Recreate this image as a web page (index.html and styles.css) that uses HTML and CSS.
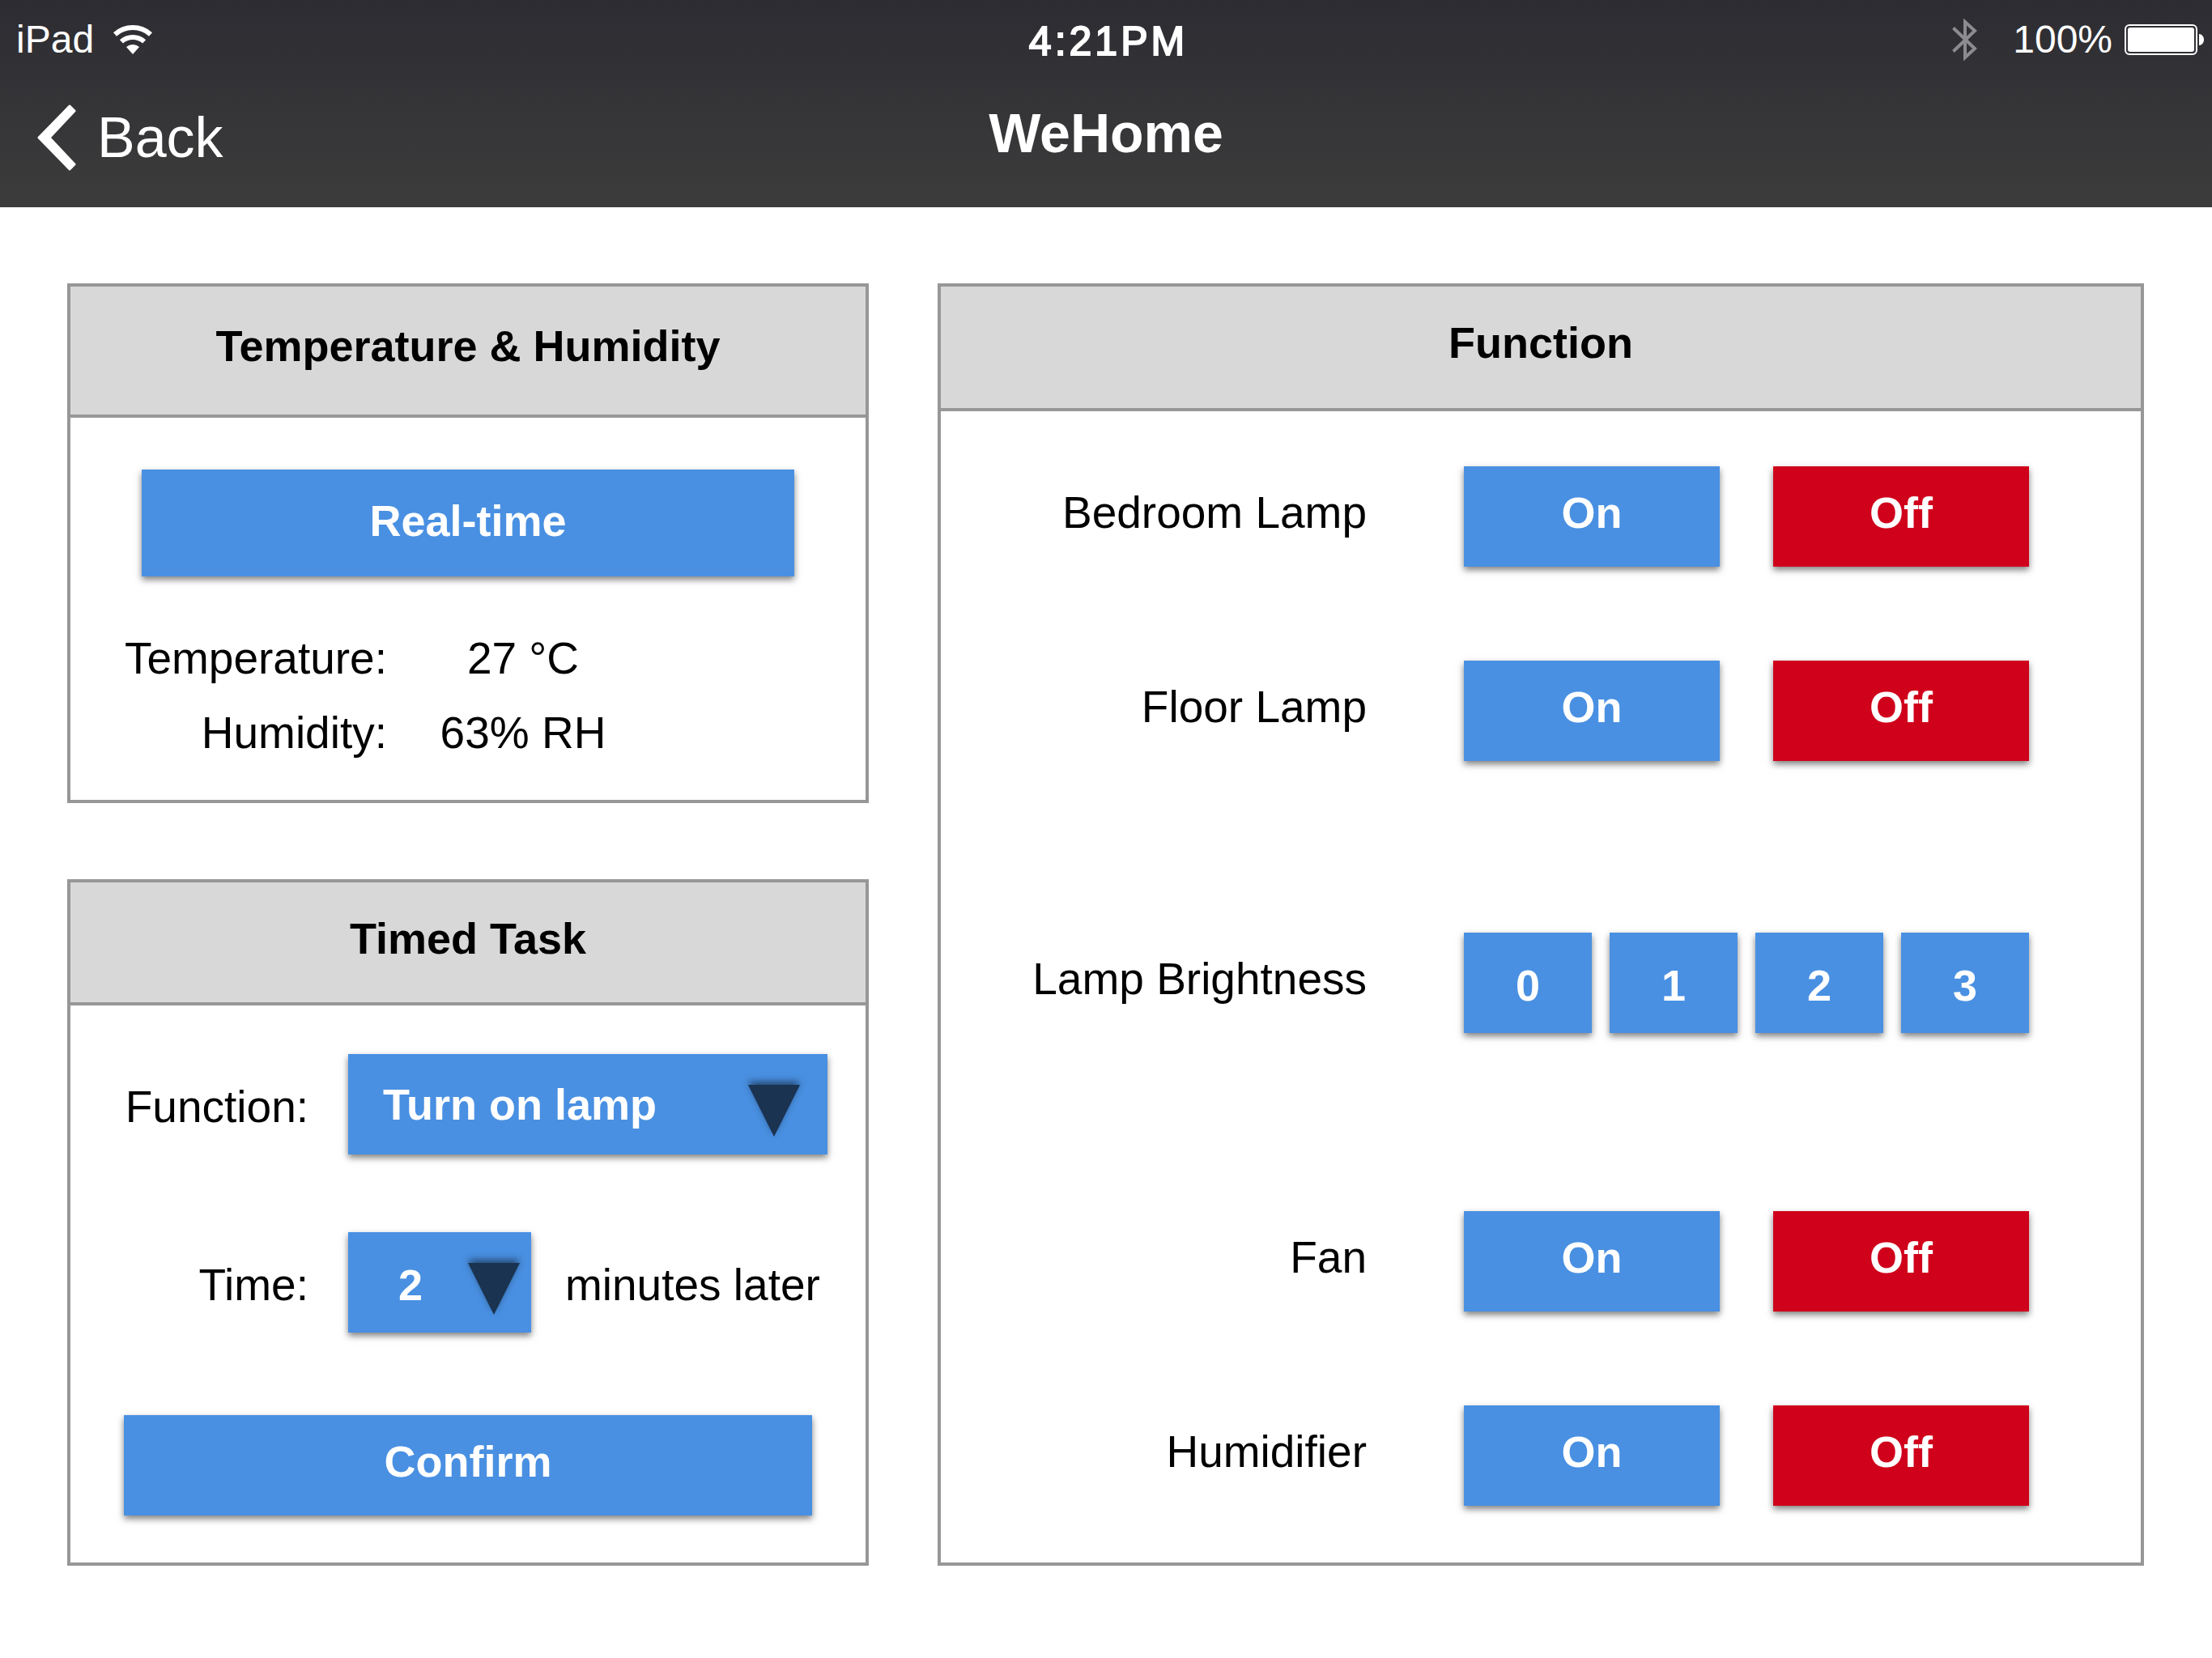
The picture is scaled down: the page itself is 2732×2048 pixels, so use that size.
FILE: index.html
```html
<!DOCTYPE html>
<html lang="en">
<head>
<meta charset="utf-8">
<meta name="viewport" content="width=device-width, initial-scale=1">
<title>WeHome</title>
<link rel="stylesheet" href="styles.css">
</head>
<body>
<header class="topbar">
  <div class="status">
    <div class="status-side">
      <span>iPad</span>
      <svg class="wifi" width="48" height="36" viewBox="0 0 48 36" role="img" aria-label="Wi-Fi">
        <path d="M2 11.5A33 33 0 0 1 46 11.5M9.9 20.4A21 21 0 0 1 38.1 20.4" fill="none" stroke="#fff" stroke-width="6"/>
        <path d="M24 36L16 27.1A12 12 0 0 1 32 27.1Z" fill="#fff"/>
      </svg>
    </div>
    <time class="clock">4:21PM</time>
    <div class="status-side status-end">
      <svg class="bluetooth" width="32" height="52" viewBox="0 0 32 52" role="img" aria-label="Bluetooth">
        <path d="M1.5 11.5L28 37L16 48V4L28 15L1.5 40.5" fill="none" stroke="#8c8c8f" stroke-width="4"/>
      </svg>
      <span>100%</span>
      <svg class="battery" width="98" height="38" viewBox="0 0 98 38" role="img" aria-label="Battery full">
        <rect x="1" y="1" width="88" height="36" rx="5" fill="none" stroke="#fff" stroke-width="2"/>
        <rect x="4" y="4" width="82" height="30" rx="3" fill="#fff"/>
        <path d="M92 12C100 13 100 25 92 26Z" fill="#fff"/>
      </svg>
    </div>
  </div>
  <nav class="nav">
    <button class="back" type="button">
      <svg width="48" height="82" viewBox="0 0 48 82" aria-hidden="true">
        <path d="M40 2L46 8L15 41L46 74L40 80L2 41Z" fill="#fff" stroke="#fff" stroke-width="3" stroke-linejoin="round"/>
      </svg>
      Back
    </button>
    <h1 class="title">WeHome</h1>
  </nav>
</header>

<main class="board">
  <div class="column">
    <section class="card climate">
      <h2 class="card-head card-head-tall">Temperature &amp; Humidity</h2>
      <div class="climate-body">
        <button class="btn btn-tall" type="button">Real-time</button>
        <dl class="readings">
          <dt>Temperature:</dt><dd>27 °C</dd>
          <dt>Humidity:</dt><dd>63% RH</dd>
        </dl>
      </div>
    </section>

    <section class="card">
      <h2 class="card-head">Timed Task</h2>
      <form class="task">
        <div class="field">
          <label class="field-label" for="task-function">Function:</label>
          <div class="picker">
            <select class="select" id="task-function">
              <option>Turn on lamp</option>
              <option>Turn off lamp</option>
            </select>
            <svg class="arrow" width="64" height="64" viewBox="0 0 64 64" aria-hidden="true"><path d="M0 0H64L32 64Z" fill="#1a3350"/></svg>
          </div>
        </div>
        <div class="field">
          <label class="field-label" for="task-time">Time:</label>
          <div class="delay">
            <div class="picker picker-small">
              <select class="select select-small" id="task-time">
                <option>1</option>
                <option selected>2</option>
                <option>3</option>
              </select>
              <svg class="arrow arrow-small" width="64" height="64" viewBox="0 0 64 64" aria-hidden="true"><path d="M0 0H64L32 64Z" fill="#1a3350"/></svg>
            </div>
            <span class="unit">minutes later</span>
          </div>
        </div>
        <button class="btn confirm" type="button">Confirm</button>
      </form>
    </section>
  </div>

  <section class="card">
    <h2 class="card-head card-head-short">Function</h2>
    <div class="functions">
      <div class="row" role="group" aria-labelledby="bedroom">
        <span class="row-label" id="bedroom">Bedroom Lamp</span>
        <div class="switch"><button class="btn" type="button">On</button><button class="btn btn-off" type="button">Off</button></div>
      </div>
      <div class="row" role="group" aria-labelledby="floor">
        <span class="row-label" id="floor">Floor Lamp</span>
        <div class="switch"><button class="btn" type="button">On</button><button class="btn btn-off" type="button">Off</button></div>
      </div>
      <div class="row row-levels" role="group" aria-labelledby="brightness">
        <span class="row-label" id="brightness">Lamp Brightness</span>
        <div class="switch levels"><button class="btn level" type="button">0</button><button class="btn level" type="button">1</button><button class="btn level" type="button">2</button><button class="btn level" type="button">3</button></div>
      </div>
      <div class="row" role="group" aria-labelledby="fan">
        <span class="row-label" id="fan">Fan</span>
        <div class="switch"><button class="btn" type="button">On</button><button class="btn btn-off" type="button">Off</button></div>
      </div>
      <div class="row" role="group" aria-labelledby="humidifier">
        <span class="row-label" id="humidifier">Humidifier</span>
        <div class="switch"><button class="btn" type="button">On</button><button class="btn btn-off" type="button">Off</button></div>
      </div>
    </div>
  </section>
</main>
</body>
</html>
```
FILE: styles.css
```css
* {
  box-sizing: border-box;
}

body {
  margin: 0;
  background: #fff;
  color: #000;
  font-family: "Helvetica Neue", "Liberation Sans", Arial, sans-serif;
  font-size: 55px;
  line-height: 64px;
}

h1, h2, dl, dd {
  margin: 0;
}

button, select {
  font: inherit;
  border: 0;
  border-radius: 0;
  margin: 0;
  cursor: pointer;
}

svg {
  display: block;
  flex: none;
}

/* Status bar and navigation */
.topbar {
  background: linear-gradient(#2d2c32, #3c3c3c);
  color: #fff;
  padding-bottom: 14px;
}

.status {
  display: grid;
  grid-template-columns: 1fr auto 1fr;
  align-items: center;
  height: 98px;
  padding: 0 10px 0 20px;
  font-size: 48px;
}

.status-side {
  display: flex;
  align-items: center;
  gap: 24px;
}

.status-end {
  justify-content: flex-end;
  gap: 15px;
}

.bluetooth {
  margin-right: 28px;
}

.clock {
  padding: 4px 4px 0 0;
  font-size: 50px;
  letter-spacing: 4px;
  -webkit-text-stroke: 2px #fff;
}

.nav {
  display: grid;
  grid-template-columns: 1fr auto 1fr;
  align-items: center;
  height: 144px;
}

.back {
  display: flex;
  align-items: center;
  justify-self: start;
  gap: 26px;
  height: 144px;
  padding: 0 46px;
  background: none;
  color: #fff;
  font-size: 70px;
}

.title {
  padding-bottom: 12px;
  font-size: 68px;
  font-weight: bold;
}

/* Cards */
.board {
  display: grid;
  grid-template-columns: 990fr 1490fr;
  column-gap: 85px;
  padding: 94px 84px 114px 83px;
}

.column {
  display: flex;
  flex-direction: column;
  gap: 94px;
}

.card {
  border: 4px solid #979797;
}

.card-head {
  padding: 37px 0 47px;
  border-bottom: 4px solid #979797;
  background: #d8d8d8;
  font-size: 54px;
  font-weight: bold;
  text-align: center;
}

.card-head-tall {
  padding: 41px 0 53px;
}

.card-head-short {
  padding-bottom: 49px;
}

.btn {
  flex: 1;
  height: 124px;
  padding: 0 0 10px;
  background: #4990e2;
  color: #fff;
  font-size: 54px;
  font-weight: bold;
  box-shadow: 0 4px 8px rgba(0, 0, 0, 0.5);
}

.btn-off {
  background: #d0021b;
}

.btn-tall {
  width: 100%;
  height: 132px;
  padding-bottom: 6px;
}

.climate-body {
  padding: 64px 88px 37px;
}

.readings {
  display: grid;
  grid-template-columns: 303px 336px;
  margin-top: 55px;
  line-height: 92px;
}

.readings dt {
  justify-self: end;
  white-space: nowrap;
}

.readings dd {
  text-align: center;
}

/* Timed task form */
.task {
  display: flex;
  flex-direction: column;
  padding: 60px 0 58px;
}

.field {
  display: grid;
  grid-template-columns: 294px 1fr;
  align-items: center;
  column-gap: 49px;
  margin-bottom: 96px;
  padding-right: 47px;
}

.field-label {
  padding-top: 6px;
  text-align: right;
}

.picker {
  position: relative;
}

.picker-small {
  width: 226px;
}

.select {
  display: block;
  width: 100%;
  height: 124px;
  padding: 0 100px 0 43px;
  appearance: none;
  background: #4990e2;
  color: #fff;
  font-size: 54px;
  font-weight: bold;
  box-shadow: 0 4px 8px rgba(0, 0, 0, 0.5);
}

.select-small {
  padding: 6px 80px 0 62px;
}

.arrow {
  position: absolute;
  top: 38px;
  right: 34px;
  overflow: visible;
  pointer-events: none;
  filter: drop-shadow(0 -4px 4px rgba(0, 0, 0, 0.5));
}

.arrow-small {
  right: 14px;
}

.delay {
  display: flex;
  align-items: center;
  gap: 42px;
}

.unit {
  padding-top: 6px;
  white-space: nowrap;
}

.confirm {
  flex: none;
  margin: 6px 66px 0;
}

/* Appliance switches */
.functions {
  display: flex;
  flex-direction: column;
  gap: 116px;
  padding: 68px 138px 70px 0;
}

.row {
  display: grid;
  grid-template-columns: 526fr 698fr;
  align-items: center;
  column-gap: 120px;
}

.row-levels {
  margin: 96px 0 104px;
}

.row-label {
  padding-bottom: 10px;
  text-align: right;
}

.switch {
  display: flex;
  gap: 66px;
}

.levels {
  gap: 22px;
}

.level {
  padding: 6px 0 0;
}
```
